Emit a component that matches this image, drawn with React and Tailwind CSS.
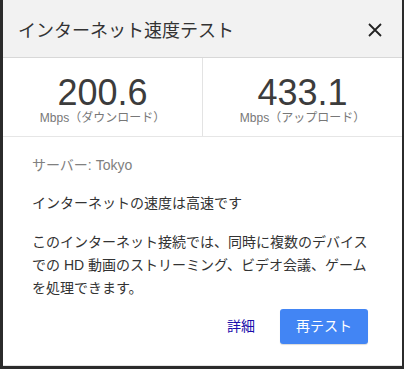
import React from "react";

const font = { fontFamily: '"Liberation Sans", "Noto Sans CJK JP", sans-serif' };

function Stat({ value, label }) {
  return (
    <div className="flex-1 flex flex-col items-center pt-[19px]">
      <div className="text-[36px] leading-[32px] text-[#3c3c3c]">{value}</div>
      <div className="text-[12px] leading-[14px] text-[#777] mt-[2px]">{label}</div>
    </div>
  );
}

export default function App() {
  return (
    <div className="w-[404px] h-[369px] bg-[#2b2b2b] flex overflow-hidden" style={font}>
      <div className="ml-[3px] w-[399px] h-[366px] bg-white flex flex-col border-b border-[#e4e4e4]">
        {/* header */}
        <div className="h-[58px] shrink-0 bg-[#f2f2f2] border-b border-[#d8d8d8] flex items-center justify-between pl-[15px] pr-[20px]">
          <div className="text-[18px] text-[#333] pt-[6px]">インターネット速度テスト</div>
          <svg width="14" height="14" viewBox="0 0 14 14" className="mt-[2px]">
            <path d="M1 1 L13 13 M13 1 L1 13" stroke="#222" strokeWidth="1.8" />
          </svg>
        </div>

        {/* stats */}
        <div className="h-[79px] shrink-0 flex border-b border-[#e6e6e6]">
          <Stat value="200.6" label="Mbps（ダウンロード）" />
          <div className="w-px bg-[#e3e3e3]" />
          <Stat value="433.1" label="Mbps（アップロード）" />
        </div>

        {/* body */}
        <div className="flex-1 flex flex-col px-[29px] pt-[17px] text-[14px] leading-[23px] text-[#333]">
          <div className="text-[#808080]">サーバー: Tokyo</div>
          <div className="mt-[15px]">インターネットの速度は高速です</div>
          <div className="mt-[16px]">
            このインターネット接続では、同時に複数のデバイスでの HD 動画のストリーミング、ビデオ会議、ゲームを処理できます。
          </div>
          <div className="mt-auto mb-[21px] flex items-center justify-end gap-[25px] pr-[5px]">
            <button className="text-[14px] text-[#1a0dab]">詳細</button>
            <button className="w-[88px] h-[35px] rounded-[3px] bg-[#4285f4] text-white text-[14px] shadow-[0_1px_1px_rgba(0,0,0,0.15)]">
              再テスト
            </button>
          </div>
        </div>
      </div>
    </div>
  );
}
